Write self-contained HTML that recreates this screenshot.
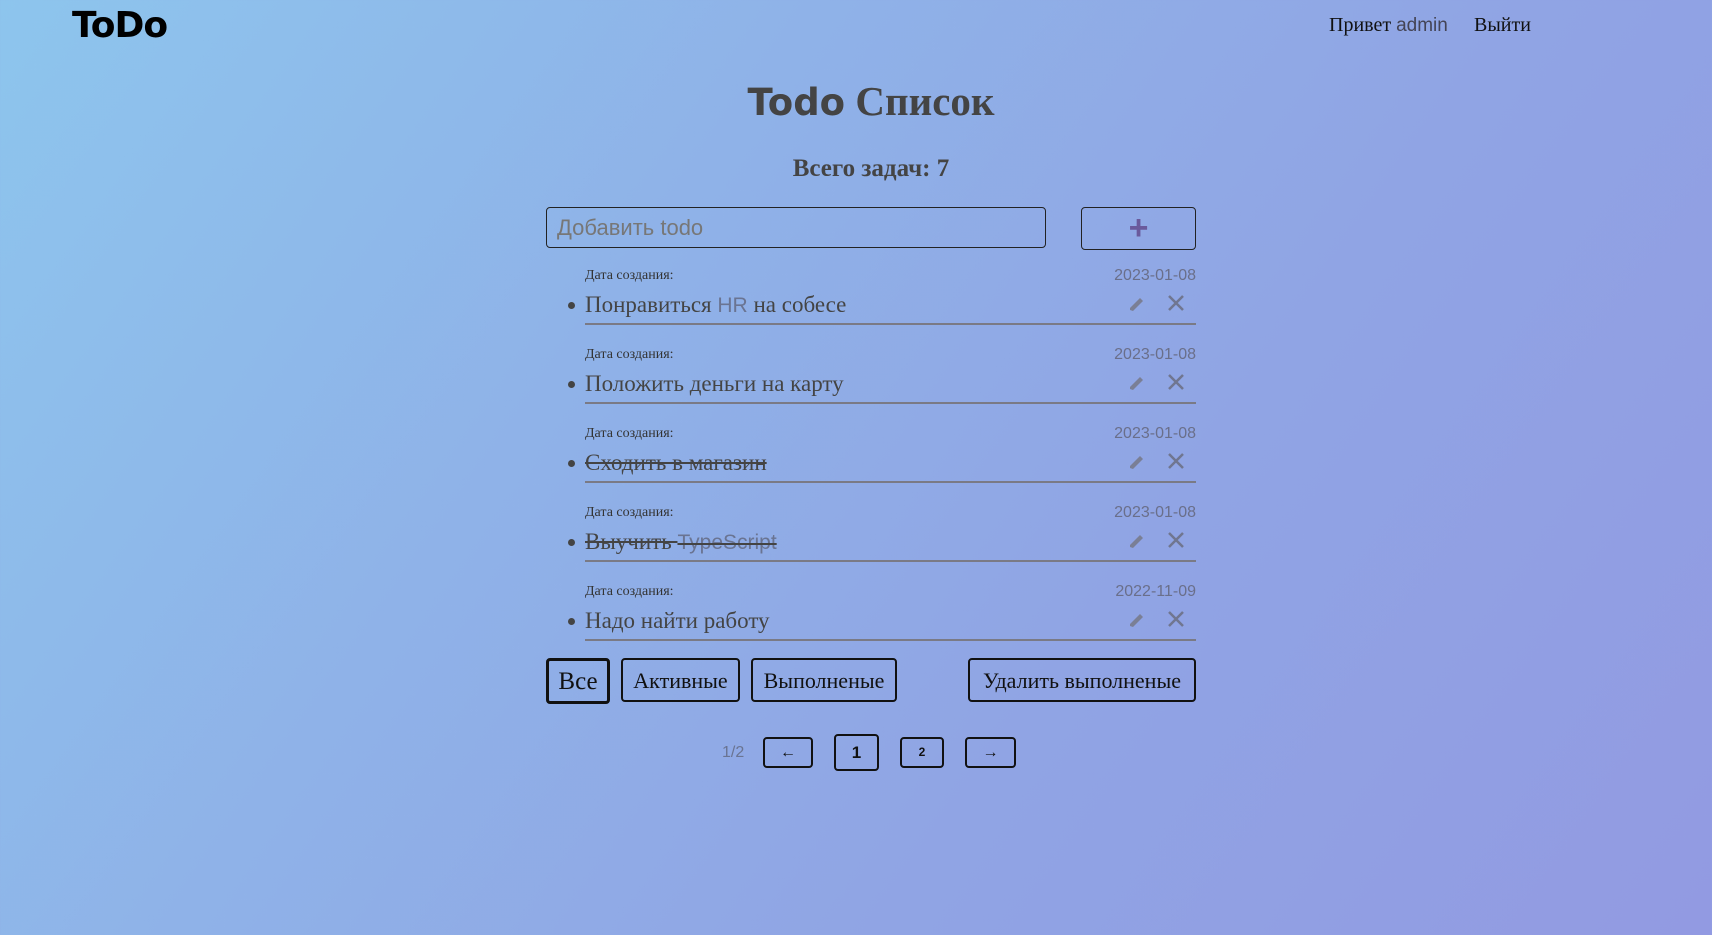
<!DOCTYPE html>
<html><head><meta charset="utf-8"><style>
*{box-sizing:border-box;margin:0;padding:0}
body{width:1712px;height:935px;overflow:hidden;background:linear-gradient(125deg,#8dc5ed 0%,#8fb2e8 35%,#90a4e4 65%,#929ae2 100%);font-family:"Liberation Serif",serif;color:#444;position:relative}
.a{position:absolute}
.logo{left:72px;top:5px;font:bold 36px "DejaVu Sans","Liberation Sans",sans-serif;color:#000;letter-spacing:-1px}
.hdr{top:14px;font-size:20px;color:#111}
.title{left:0;width:1742px;text-align:center;top:77px;font-size:41px;font-weight:bold;color:#444}
.title span{font-family:"DejaVu Sans",sans-serif;font-size:37px}
.cnt{left:0;width:1742px;text-align:center;top:155px;font-size:25px;font-weight:bold;color:#444}
.inp{left:546px;top:207px;width:500px;height:41px;border:1.5px solid #222;border-radius:4px;font:22px "Liberation Sans",sans-serif;color:#777;padding:7px 10px}
.add{left:1081px;top:207px;width:115px;height:43px;border:1.5px solid #222;border-radius:4px;color:#6a5a9c;font:bold 34px "Liberation Sans",sans-serif;text-align:center;line-height:40px}
.item{left:568px;width:628px;height:79px}
.lbl{position:absolute;left:17px;top:2px;font-size:14px;color:#333}
.dt{position:absolute;right:0;top:1px;font:16px "Liberation Sans",sans-serif;color:#6a6f8a}
.txt{position:absolute;left:17px;top:26px;font-size:23px;color:#444}
.txt i{font-style:normal;font-family:"Liberation Sans",sans-serif;font-size:21px;color:#6a7492}
.dot{position:absolute;left:0;top:36px;width:7px;height:7px;border-radius:50%;background:#444}
.ln{position:absolute;left:17px;right:0;top:57px;height:2px;background:#7a7a85}
.s{text-decoration:line-through}
.ic{position:absolute;top:28px}
.btn{border:2px solid #111;border-radius:4px;text-align:center;font-size:22px;color:#111;top:658px;height:44px;line-height:42px}
.pg{border:2px solid #111;border-radius:4px;text-align:center;color:#111;font:bold 14px "Liberation Sans",sans-serif}
</style></head><body>
<div class="a logo">ToDo</div>
<div class="a hdr" style="left:1329px">Привет <span style="font-family:'Liberation Sans',sans-serif;font-size:19px;color:#445">admin</span></div>
<div class="a hdr" style="left:1474px">Выйти</div>
<div class="a title"><span>Todo</span> Список</div>
<div class="a cnt">Всего задач: 7</div>
<div class="a inp">Добавить todo</div>
<div class="a add">+</div>

<div class="a item" style="top:266px"><div class="lbl">Дата создания:</div><div class="dt">2023-01-08</div><div class="dot"></div><div class="txt">Понравиться <i>HR</i> на собесе</div><div class="ln"></div>
<svg class="ic" style="left:558px" width="20" height="20"><path d="M4 16 L7 17 L17 7 L14 4 L4 14 Z" fill="#7a7f95"/></svg><svg class="ic" style="left:599px" width="18" height="18"><path d="M2 2L16 16M16 2L2 16" stroke="#707690" stroke-width="2.5"/></svg></div>
<div class="a item" style="top:345px"><div class="lbl">Дата создания:</div><div class="dt">2023-01-08</div><div class="dot"></div><div class="txt">Положить деньги на карту</div><div class="ln"></div>
<svg class="ic" style="left:558px" width="20" height="20"><path d="M4 16 L7 17 L17 7 L14 4 L4 14 Z" fill="#7a7f95"/></svg><svg class="ic" style="left:599px" width="18" height="18"><path d="M2 2L16 16M16 2L2 16" stroke="#707690" stroke-width="2.5"/></svg></div>
<div class="a item" style="top:424px"><div class="lbl">Дата создания:</div><div class="dt">2023-01-08</div><div class="dot"></div><div class="txt s">Сходить в магазин</div><div class="ln"></div>
<svg class="ic" style="left:558px" width="20" height="20"><path d="M4 16 L7 17 L17 7 L14 4 L4 14 Z" fill="#7a7f95"/></svg><svg class="ic" style="left:599px" width="18" height="18"><path d="M2 2L16 16M16 2L2 16" stroke="#707690" stroke-width="2.5"/></svg></div>
<div class="a item" style="top:503px"><div class="lbl">Дата создания:</div><div class="dt">2023-01-08</div><div class="dot"></div><div class="txt s">Выучить <i>TypeScript</i></div><div class="ln"></div>
<svg class="ic" style="left:558px" width="20" height="20"><path d="M4 16 L7 17 L17 7 L14 4 L4 14 Z" fill="#7a7f95"/></svg><svg class="ic" style="left:599px" width="18" height="18"><path d="M2 2L16 16M16 2L2 16" stroke="#707690" stroke-width="2.5"/></svg></div>
<div class="a item" style="top:582px"><div class="lbl">Дата создания:</div><div class="dt">2022-11-09</div><div class="dot"></div><div class="txt">Надо найти работу</div><div class="ln"></div>
<svg class="ic" style="left:558px" width="20" height="20"><path d="M4 16 L7 17 L17 7 L14 4 L4 14 Z" fill="#7a7f95"/></svg><svg class="ic" style="left:599px" width="18" height="18"><path d="M2 2L16 16M16 2L2 16" stroke="#707690" stroke-width="2.5"/></svg></div>

<div class="a btn" style="left:546px;width:64px;height:46px;border-width:3px;font-size:25px">Все</div>
<div class="a btn" style="left:621px;width:119px">Активные</div>
<div class="a btn" style="left:751px;width:146px">Выполненые</div>
<div class="a btn" style="left:968px;width:228px">Удалить выполненые</div>

<div class="a" style="left:722px;top:744px;font:16px 'Liberation Sans',sans-serif;color:#6a7492">1/2</div>
<div class="a pg" style="left:763px;top:737px;width:50px;height:31px;line-height:27px;font-size:16px">←</div>
<div class="a pg" style="left:834px;top:734px;width:45px;height:37px;line-height:33px;font-size:17px">1</div>
<div class="a pg" style="left:900px;top:737px;width:44px;height:31px;line-height:27px;font-size:12px">2</div>
<div class="a pg" style="left:965px;top:737px;width:51px;height:31px;line-height:27px;font-size:16px">→</div>
</body></html>
